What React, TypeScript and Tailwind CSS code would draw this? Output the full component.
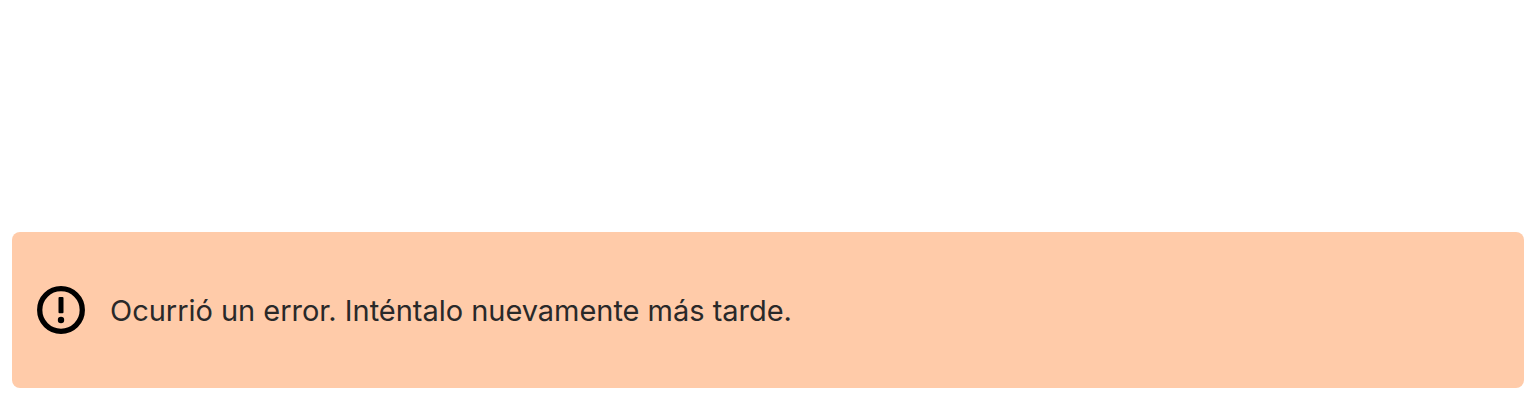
export default function App() {
  return (
    <main className="flex h-[400px] w-full flex-col justify-end bg-white px-3 pb-3">
      <div role="alert" className="flex h-[156px] items-center gap-[25px] rounded-lg bg-[#ffcba9] pl-[25px] text-[#292929]">
        <svg className="size-12 shrink-0" viewBox="0 0 48 48" fill="none" aria-hidden="true">
          <circle cx="24" cy="24" r="21.3" stroke="black" strokeWidth="5.3" />
          <rect x="21.5" y="11" width="5" height="16.3" rx="1" fill="black" />
          <circle cx="24" cy="34" r="3.2" fill="black" />
        </svg>
        <p className="pt-0.5 whitespace-nowrap font-['Inter',sans-serif] text-[29px] leading-10 tracking-[-0.03px]">
          Ocurrió un error. Inténtalo nuevamente más tarde.
        </p>
      </div>
    </main>
  );
}
